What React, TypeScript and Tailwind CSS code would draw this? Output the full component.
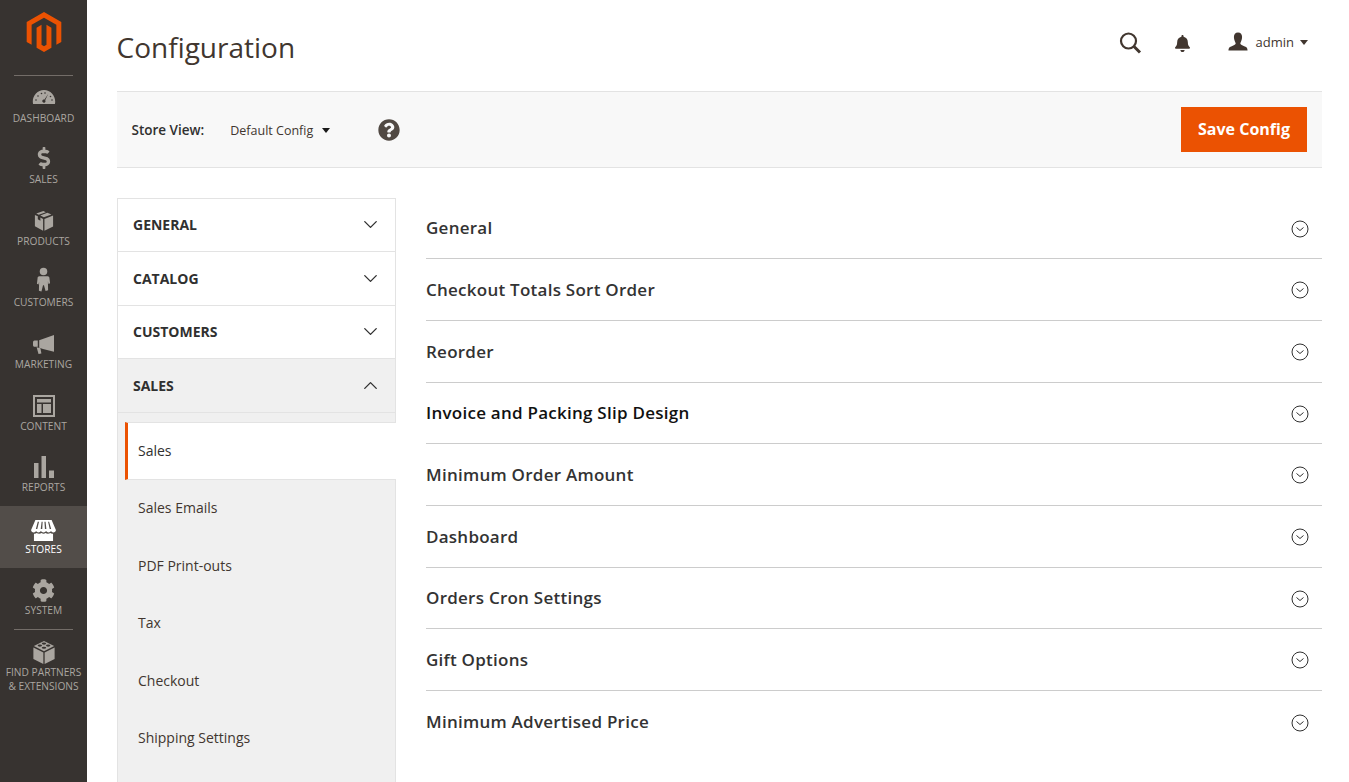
import React from 'react';
import { ChevronDown, ChevronUp } from 'lucide-react';
import { FaBell, FaCog, FaDollarSign, FaQuestionCircle } from 'react-icons/fa';

// left navigation icons, drawn to the size they have in the bar
const DashboardIcon = () => (
  <svg width="24" height="24" viewBox="0 0 24 24" fill="currentColor">
    <path fillRule="evenodd" d="M12 4C5.6 4 .8 9.4.8 15.6c0 1 .1 1.6.3 2.4h21.8c.2-.8.3-1.4.3-2.4C23.200 9.400 18.400 4 12 4zM16.300 7.800l-3.100 6.400c.5.700.4 1.700-.3 2.200-.8.600-1.800.4-2.300-.3-.5-.8-.4-1.700.4-2.300.5-.3 1-.4 1.500-.2z" />
    <g fill="#373330">
      <circle cx="4" cy="14" r=".8" />
      <circle cx="6" cy="10" r=".8" />
      <circle cx="9.500" cy="7.500" r=".8" />
      <circle cx="13" cy="7" r=".8" />
      <circle cx="20" cy="14" r=".8" />
      <circle cx="18.500" cy="10.500" r=".8" />
    </g>
  </svg>
);

const BoxIcon = () => (
  <svg width="20" height="22" viewBox="0 0 22 24" fill="currentColor">
    <path d="M10.300 1 2.500 3.700l2.700 1.500 7.800-2.900zM14.700 3 6.900 6l3.900 2 8.400-3.100zM1 5.500v12.300l9 5V9.800l-3-1.600v3.500L4.200 10V6.900zM21 6l-9.500 3.700v13L21 18z" />
  </svg>
);

const PersonIcon = () => (
  <svg width="15" height="25" viewBox="0 0 16 26" fill="currentColor" className="mb-[6px]">
    <circle cx="8" cy="4.500" r="4" />
    <path d="M3.500 9.500h9c1 0 1.800.8 1.800 1.800l.7 5.700-1.700.8-.6-3 .2 9.700-2.700.8L8.500 19h-1l-1.700 6.800-2.700-.8.200-9.700-.6 3L1 17.500l.7-6.200c0-1 .8-1.800 1.800-1.800z" />
  </svg>
);

const MegaphoneIcon = () => (
  <svg width="23" height="21" viewBox="0 0 24 22" fill="currentColor">
    <path d="M23 1 7.500 6.500v7.800l4 1.300L23 18.500zM6 6.800H2.600C1.700 6.800 1 7.700 1 8.800v2.600c0 1 .7 1.900 1.600 1.900H6z" />
    <path d="m4.800 13.800 4 1.200 1 5.500-3 .5z" />
  </svg>
);

const ContentIcon = () => (
  <svg width="22" height="22" viewBox="0 0 22 22" fill="currentColor">
    <path fillRule="evenodd" d="M0 0h22v22H0zM2 2v18h18V2z" />
    <path d="M4 4h14v3.500H4zM4 9h4.500v9H4zM10 9h8v9h-8z" />
  </svg>
);

const BarsIcon = () => (
  <svg width="20" height="22" viewBox="0 0 20 22" fill="currentColor">
    <path d="M0 7h4.500v15H0zM7.500 0H12v22H7.500zM15 14.500h5V22h-5z" />
  </svg>
);

const StoreIcon = () => (
  <svg width="25" height="21" viewBox="0 0 26 22" fill="currentColor" className="mt-[3px]">
    <path fillRule="evenodd" d="M4.500 0h17L26 10.500c0 1.800-1.300 2.500-2.700 2.500-1.200 0-2-.6-2.400-1.400-.5.900-1.500 1.400-2.600 1.400s-2.100-.6-2.600-1.400c-.5.800-1.500 1.400-2.700 1.400s-2.200-.6-2.700-1.400c-.5.800-1.500 1.400-2.600 1.400s-2-.5-2.500-1.400C4.800 12.400 4 13 2.800 13 1.300 13 0 12.300 0 10.500zM7 1.800 5 9.500h1.500l1.800-7.700zM11 1.800l-.9 7.700h1.600l.4-7.700zM14 1.800l.5 7.700H16l-.8-7.700zM17.800 1.800l1.700 7.700H21L18.900 1.800z" />
    <path d="M3 14.300c1.200.2 2.100-.1 2.900-.7 1.300 1 3.700 1 5 0 1.300 1 3.100 1 4.300 0 1.300 1 3.600 1 4.900 0 .8.600 1.700.9 2.900.7V22H3z" />
  </svg>
);

const LegoIcon = () => (
  <svg width="24" height="24" viewBox="0 0 24 26" fill="currentColor">
    <path d="M12 0 1 5.500 12 11l11-5.500zM.500 7v12.500L11.300 25V12.500zM23.500 7v12.500L12.700 25V12.500z" />
    <g fill="#373330">
      <ellipse cx="7.500" cy="5" rx="2.400" ry="1.200" />
      <ellipse cx="12" cy="2.800" rx="2.400" ry="1.200" />
      <ellipse cx="12" cy="7.300" rx="2.400" ry="1.200" />
      <ellipse cx="16.500" cy="5" rx="2.400" ry="1.200" />
    </g>
  </svg>
);

const navItems = [
  { label: 'Dashboard', icon: <DashboardIcon /> },
  { label: 'Sales', icon: <FaDollarSign size={22} className="mb-[2px]" /> },
  { label: 'Products', icon: <BoxIcon /> },
  { label: 'Customers', icon: <PersonIcon /> },
  { label: 'Marketing', icon: <MegaphoneIcon /> },
  { label: 'Content', icon: <ContentIcon /> },
  { label: 'Reports', icon: <BarsIcon /> },
  { label: 'Stores', icon: <StoreIcon />, active: true },
  { label: 'System', icon: <FaCog size={23} /> },
];

const tabs = [
  { label: 'General' },
  { label: 'Catalog' },
  { label: 'Customers' },
  { label: 'Sales', open: true },
];

const subItems = ['Sales Emails', 'PDF Print-outs', 'Tax', 'Checkout', 'Shipping Settings'];

const sections = [
  'General',
  'Checkout Totals Sort Order',
  'Reorder',
  'Invoice and Packing Slip Design',
  'Minimum Order Amount',
  'Dashboard',
  'Orders Cron Settings',
  'Gift Options',
  'Minimum Advertised Price',
];

const Sidebar = () => (
  <aside className="w-[87px] h-full shrink-0 bg-[#373330] text-[#aaa6a0] flex flex-col items-center">
    <div className="h-[74.6px] w-full flex justify-center pt-3 shrink-0">
      <svg width="40" height="40" viewBox="0 0 24 24" fill="#eb5202">
        <path d="M12 24l-4.455-2.572v-12l2.97-1.715v12.001L12 20.574l1.485-.86V7.713l2.97 1.715v12L12 24zM22.391 6v12l-2.969 1.714V7.713L12 3.43 4.574 7.713v12.001L1.609 18V6L12 0l10.391 6z" />
      </svg>
    </div>
    <div className="w-[59px] h-px bg-[#736d68] shrink-0" />
    {navItems.map((item) => (
      <div
        key={item.label}
        className={`w-full h-[61.55px] shrink-0 flex flex-col items-center pt-[9.25px] ${
          item.active ? 'bg-[#524d49] text-white' : ''
        }`}
      >
        <div className="h-[26px] flex items-center justify-center">{item.icon}</div>
        <span className="text-[10.2px] leading-[14px] uppercase">{item.label}</span>
      </div>
    ))}
    <div className="w-[59px] h-px -mt-[0.6px] bg-[#736d68] shrink-0" />
    <div className="w-full flex flex-col items-center pt-[11px]">
      <LegoIcon />
      <span className="text-[10.2px] leading-[14px] uppercase text-center whitespace-nowrap">
        Find Partners
        <br />
        &amp; Extensions
      </span>
    </div>
  </aside>
);

const Header = () => (
  <header className="h-[91px] flex items-start justify-between shrink-0">
    <h1 className="mt-[27px] -ml-[0.5px] text-[28px] leading-[40px] font-normal text-[#41362f]">Configuration</h1>
    <div className="flex items-center mt-[29px] mr-[14px] text-[#41362f]">
      <svg width="24" height="24" viewBox="0 0 24 24" fill="none" stroke="currentColor" className="mt-[2px]">
        <circle cx="10.500" cy="10" r="7.500" strokeWidth="2.200" />
        <path d="m16 15.500 6 6" strokeWidth="3" />
      </svg>
      <FaBell size={17} className="ml-[32px] mt-[2px]" />
      <svg width="20" height="19" viewBox="0 0 22 20" fill="currentColor" className="ml-[37px] mb-[2px]">
        <path d="M11 0c3 0 4.500 2 4.500 5S14 11 13.500 12c0 1.500 2.500 2.500 5 3.500 2 .8 3 1.500 3 4.500H.5c0-3 1-3.700 3-4.500 2.500-1 5-2 5-3.500C8 11 6.500 8 6.500 5S8 0 11 0z" />
      </svg>
      <span className="ml-[8px] text-[13px] leading-[18px] text-[#41362f]">admin</span>
      <span className="ml-[6px] mt-px w-0 h-0 border-x-[4.500px] border-x-transparent border-t-[5px] border-t-[#41362f]" />
    </div>
  </header>
);

const Toolbar = () => (
  <div className="h-[77px] shrink-0 bg-[#f8f8f8] border-y border-[#e3e3e3] flex items-center pl-[14.500px] pr-[15px]">
    <span className="mt-[2px] text-[13.500px] font-semibold text-[#303030]">Store View:</span>
    <span className="mt-[3px] ml-[26px] text-[12.500px] text-[#41362f]">Default Config</span>
    <span className="ml-[9px] mt-px w-0 h-0 border-x-[4.500px] border-x-transparent border-t-[5px] border-t-[#1a1a1a]" />
    <FaQuestionCircle size={22} className="ml-[48px] text-[#514943]" />
    <button className="ml-auto w-[126px] h-[45px] pb-[2px] bg-[#eb5202] text-white text-[16px] font-bold">
      Save Config
    </button>
  </div>
);

const LeftMenu = () => (
  <nav className="w-[279px] shrink-0 mt-[0.3px] text-[#303030]">
    <div className="border-x border-[#e3e3e3]">
      {tabs.map((tab) => (
        <div
          key={tab.label}
          className={`h-[53.67px] first:border-t first:pb-[1px] border-b border-[#e3e3e3] flex items-center justify-between pl-[15px] pr-[13px] ${
            tab.open ? 'bg-[#f0f0f0]' : 'bg-white'
          }`}
        >
          <span className="text-[14px] font-bold uppercase">{tab.label}</span>
          {tab.open ? (
            <ChevronUp size={23} strokeWidth={1.400} className="text-[#303030]" />
          ) : (
            <ChevronDown size={23} strokeWidth={1.400} className="text-[#303030]" />
          )}
        </div>
      ))}
    </div>
    <div className="bg-[#f0f0f0] border-x border-[#e3e3e3] pt-[9px] pb-[40px]">
      <div className="h-[58px] ml-[7px] -mr-px bg-white border-y border-[#e3e3e3] border-l-[3px] border-l-[#eb5202] flex items-center pl-[10px] text-[14px]">
        Sales
      </div>
      <div className="-mt-[0.7px]">
        {subItems.map((item) => (
          <div key={item} className="h-[57.5px] flex items-center pl-[20px] text-[14px] text-[#41362f]">
            {item}
          </div>
        ))}
      </div>
    </div>
  </nav>
);

const SectionRow = ({ title }: { title: string }) => (
  <div className="h-[61.67px] border-b border-[#cccccc] last:border-b-0 flex items-center justify-between pr-[13px]">
    <span
      className={`text-[17px] font-semibold tracking-[0.25px] ${
        title.startsWith('Invoice') ? 'text-[#111111]' : 'text-[#333333]'
      }`}
    >
      {title}
    </span>
    <svg width="18" height="18" viewBox="0 0 18 18" fill="none" stroke="#303030" strokeWidth="1" className="mt-[1.500px]">
      <circle cx="9" cy="9" r="8" />
      <path d="m5.500 7.500 3.500 3 3.500-3" />
    </svg>
  </div>
);

export default function App() {
  return (
    <div className="h-screen w-full overflow-hidden flex bg-white font-['Open_Sans',sans-serif]">
      <Sidebar />
      <main className="flex-1 min-w-0 flex flex-col pl-[30px] pr-[27px]">
        <Header />
        <Toolbar />
        <div className="flex gap-[30px] mt-[30px]">
          <LeftMenu />
          <div className="flex-1 min-w-0 -mt-[0.3px]">
            {sections.map((title) => (
              <SectionRow key={title} title={title} />
            ))}
          </div>
        </div>
      </main>
    </div>
  );
}
